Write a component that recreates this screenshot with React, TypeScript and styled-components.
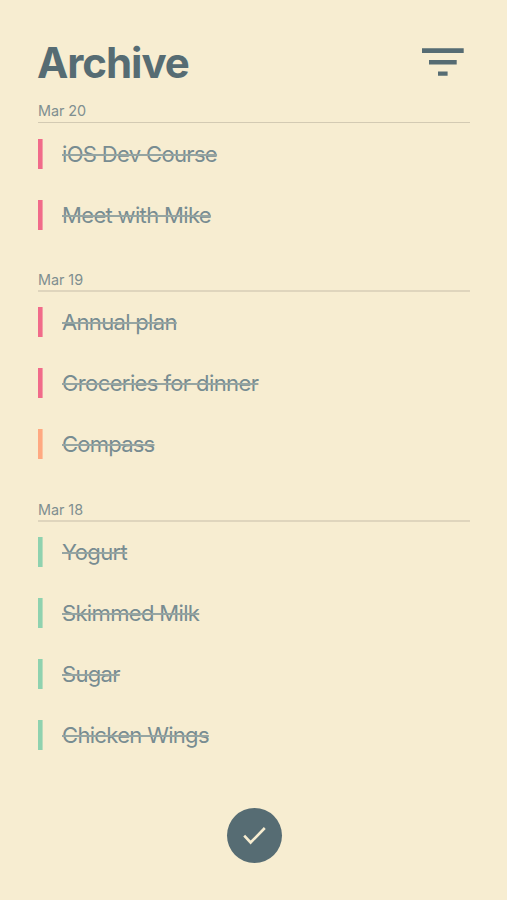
import React from "react";
import styled, { createGlobalStyle } from "styled-components";

const Global = createGlobalStyle`
  * { box-sizing: border-box; }
  body { margin: 0; background: #f7edd1; font-family: Inter, "Liberation Sans", sans-serif; }
`;
const Screen = styled.main`
  width: 507px; height: 900px; padding: 39px 37px 0 38px;
  display: flex; flex-direction: column; background: #f7edd1; overflow: hidden;
`;
const Header = styled.header`
  height: 62px; display: flex; justify-content: space-between; align-items: flex-start;
`;
const Title = styled.h1`
  margin: 0 0 0 -1px; font-size: 42px; line-height: 48px; font-weight: 700; letter-spacing: -1.05px; color: #566c73;
`;
const FilterButton = styled.button`
  margin: 9px 6px 0 0; padding: 0; border: 0; background: none; width: 42px; height: 28px;
  svg { display: block; }
`;
const Group = styled.section`
  margin-bottom: 39px;
  & + & { margin-bottom: 40px; }
`;
const DateLabel = styled.h2<{ $first: boolean }>`
  margin: 0; height: ${p => (p.$first ? 22 : 23)}px;
  padding-top: ${p => (p.$first ? 0 : 1)}px;
  border-bottom: ${p => (p.$first ? "1px solid #d3cab3" : "2px solid #dfd5bd")};
  font-size: 14.4px; line-height: 20px; font-weight: 400; letter-spacing: -0.05px; color: #7f8f90;
`;
const Tasks = styled.ul<{ $first: boolean }>`
  list-style: none; margin: 0; padding: ${p => (p.$first ? 16 : 15)}px 0 0; display: grid; row-gap: 31px;
`;
const Task = styled.li<{ $color: string }>`
  height: 30px; padding-left: 24px; display: flex; align-items: center;
  background: linear-gradient(${p => p.$color}, ${p => p.$color}) left / 4.6px 100% no-repeat;
`;
const TaskName = styled.span<{ $spacing: number }>`
  font-size: 22px; line-height: 30px; white-space: nowrap; color: #788c91;
  letter-spacing: ${p => p.$spacing}px;
  text-decoration: line-through; text-decoration-thickness: 2px; text-decoration-color: #96a5a2;
`;
const DoneButton = styled.button`
  width: 55px; height: 55px; margin: 18px 0 0 188.5px; padding: 0; border: 0; border-radius: 50%;
  background: #566c73; flex-shrink: 0;
  svg { display: block; }
`;

const PINK = "#f16b8a";
const ORANGE = "#ffa981";
const GREEN = "#8fd2af";

type Item = { name: string; color: string; spacing: number };
const groups: { date: string; tasks: Item[] }[] = [
  {
    date: "Mar 20",
    tasks: [
      { name: "iOS Dev Course", color: PINK, spacing: -0.66 },
      { name: "Meet with Mike", color: PINK, spacing: -0.66 },
    ],
  },
  {
    date: "Mar 19",
    tasks: [
      { name: "Annual plan", color: PINK, spacing: -0.68 },
      { name: "Groceries for dinner", color: PINK, spacing: -0.61 },
      { name: "Compass", color: ORANGE, spacing: -0.76 },
    ],
  },
  {
    date: "Mar 18",
    tasks: [
      { name: "Yogurt", color: GREEN, spacing: -0.6 },
      { name: "Skimmed Milk", color: GREEN, spacing: -0.66 },
      { name: "Sugar", color: GREEN, spacing: -0.7 },
      { name: "Chicken Wings", color: GREEN, spacing: -0.68 },
    ],
  },
];

export default function App() {
  return (
    <Screen>
      <Global />
      <Header>
        <Title>Archive</Title>
        <FilterButton aria-label="Filter">
          <svg width="42" height="28" fill="#566c73">
            <path d="M0 .3h41.7v4.7H0zM7 12h27.7v4.5H7zM16 23.4h9.6v4.4H16z" />
          </svg>
        </FilterButton>
      </Header>
      {groups.map((g, i) => (
        <Group key={g.date}>
          <DateLabel $first={i === 0}>{g.date}</DateLabel>
          <Tasks $first={i === 0}>
            {g.tasks.map(t => (
              <Task key={t.name} $color={t.color}>
                <TaskName $spacing={t.spacing}>{t.name}</TaskName>
              </Task>
            ))}
          </Tasks>
        </Group>
      ))}
      <DoneButton aria-label="Done">
        <svg width="55" height="55" fill="none" stroke="#f7edd1" strokeWidth="2.6">
          <path d="M17.2 27.7l6.4 6.8L37.8 20" />
        </svg>
      </DoneButton>
    </Screen>
  );
}
